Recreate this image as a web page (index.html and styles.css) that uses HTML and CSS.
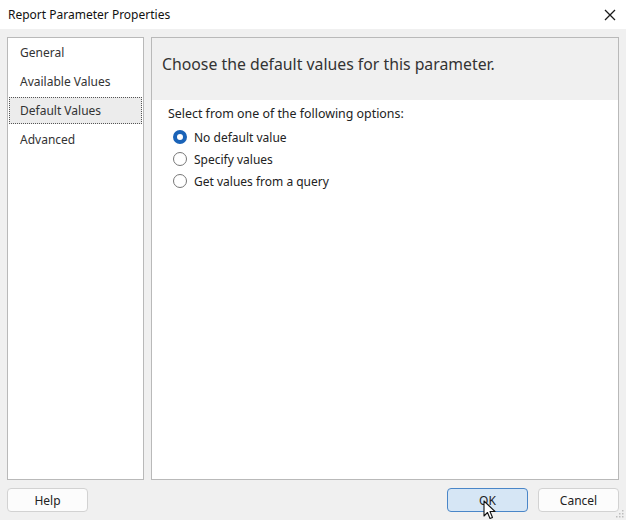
FILE: index.html
```html
<!DOCTYPE html>
<html lang="en">
<head>
    <meta charset="UTF-8">
    <title>Report Parameter Properties</title>
    <link rel="stylesheet" href="styles.css">
</head>
<body>
    <div class="dialog">
        <div class="title-bar">
            <span class="title">Report Parameter Properties</span>
            <svg class="close" width="12" height="12" viewBox="0 0 12 12">
                <path d="M1 1 L11 11 M11 1 L1 11" stroke="#1a1a1a" stroke-width="1.3" fill="none"/>
            </svg>
        </div>
        <div class="content">
            <ul class="nav">
                <li>General</li>
                <li>Available Values</li>
                <li class="selected">Default Values</li>
                <li>Advanced</li>
            </ul>
            <div class="page">
                <div class="page-header">Choose the default values for this parameter.</div>
                <div class="page-body">
                    <div class="caption">Select from one of the following options:</div>
                    <label class="option"><span class="radio checked"></span>No default value</label>
                    <label class="option"><span class="radio"></span>Specify values</label>
                    <label class="option"><span class="radio"></span>Get values from a query</label>
                </div>
            </div>
        </div>
        <div class="footer">
            <button class="btn">Help</button>
            <div class="spacer"></div>
            <button class="btn primary">OK</button>
            <button class="btn">Cancel</button>
        </div>
        <!-- mouse pointer hovering the OK button -->
        <svg class="pointer" width="14" height="20" viewBox="0 0 14 20">
            <path d="M1 1 L1 16 L4.5 12.5 L7 18.5 L9.5 17.5 L7 11.5 L12 11.5 Z" fill="#fff" stroke="#111" stroke-width="1.1" stroke-linejoin="round"/>
        </svg>
        <svg class="grip" width="8" height="8" viewBox="0 0 8 8">
            <rect x="6" y="0" width="1.5" height="1.5" fill="#bdbdbd"/>
            <rect x="3" y="3" width="1.5" height="1.5" fill="#bdbdbd"/>
            <rect x="6" y="3" width="1.5" height="1.5" fill="#bdbdbd"/>
            <rect x="0" y="6" width="1.5" height="1.5" fill="#bdbdbd"/>
            <rect x="3" y="6" width="1.5" height="1.5" fill="#bdbdbd"/>
            <rect x="6" y="6" width="1.5" height="1.5" fill="#bdbdbd"/>
        </svg>
    </div>
</body>
</html>
```

FILE: styles.css
```css
body {
    margin: 0;
    font-family: "Noto Sans", "Open Sans", sans-serif;
    color: #222;
    background-color: #f0f0f0;
}
.dialog {
    position: relative;
    width: 626px;
    height: 520px;
    display: flex;
    flex-direction: column;
    background-color: #f0f0f0;
    overflow: hidden;
}
.title-bar {
    height: 29px;
    background-color: #fff;
    display: flex;
    align-items: center;
    padding: 0 10px 0 8px;
    flex-shrink: 0;
}
.title {
    font-size: 12px;
    color: #111;
    flex: 1;
}
.content {
    display: flex;
    gap: 7px;
    padding: 8px 7px 0 7px;
    height: 443px;
    flex-shrink: 0;
}
.nav {
    list-style: none;
    margin: 0;
    padding: 1px 1px;
    width: 133px;
    background-color: #fff;
    border: 1px solid #b9b9b9;
}
.nav li {
    font-size: 12px;
    color: #333;
    height: 25px;
    line-height: 25px;
    padding-left: 10px;
    margin-bottom: 2px;
    border: 1px dotted transparent;
}
.nav li.selected {
    background-color: #ececec;
    border-color: #555;
}
.page {
    flex: 1;
    background-color: #fff;
    border: 1px solid #b9b9b9;
    display: flex;
    flex-direction: column;
}
.page-header {
    height: 62px;
    box-sizing: border-box;
    background-color: #f0f0f0;
    font-size: 15.8px;
    line-height: 22px;
    color: #333;
    padding: 15px 0 0 10px;
}
.page-body {
    padding: 5px 16px;
}
.caption {
    font-size: 12.4px;
    color: #222;
    margin-bottom: 4px;
}
.option {
    display: flex;
    align-items: center;
    font-size: 12px;
    color: #222;
    height: 22px;
    padding-left: 5px;
}
.radio {
    width: 12px;
    height: 12px;
    border: 1px solid #777;
    border-radius: 50%;
    margin-right: 7px;
    background-color: #fff;
    box-sizing: content-box;
}
.radio.checked {
    width: 6px;
    height: 6px;
    border: 4px solid #1a63b8;
}
.footer {
    flex: 1;
    display: flex;
    align-items: flex-start;
    padding: 8px 7px 0 7px;
    gap: 10px;
}
.spacer {
    flex: 1;
}
.btn {
    width: 81px;
    height: 24px;
    font-family: "Noto Sans", "Open Sans", sans-serif;
    font-size: 12px;
    color: #222;
    background-color: #fcfcfc;
    border: 1px solid #d2d2d2;
    border-radius: 4px;
}
.btn.primary {
    background-color: #d6e6f5;
    border-color: #4a86c8;
}
.pointer {
    position: absolute;
    left: 483px;
    top: 500px;
}
.grip {
    position: absolute;
    right: 2px;
    bottom: 2px;
}
```
